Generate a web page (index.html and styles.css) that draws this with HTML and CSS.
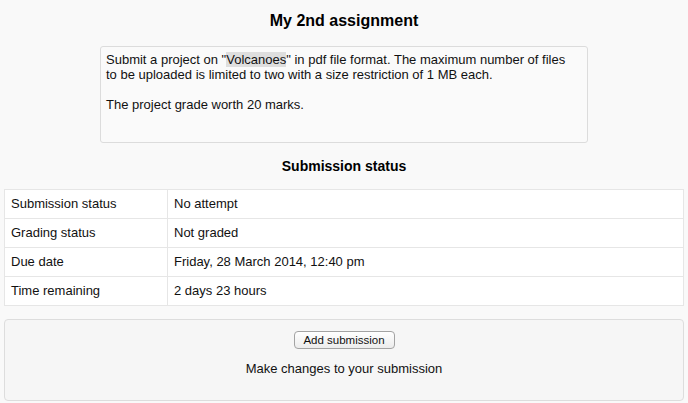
FILE: index.html
```html
<!DOCTYPE html>
<html lang="en">
<head>
<meta charset="utf-8">
<title>My 2nd assignment</title>
<link rel="stylesheet" href="styles.css">
</head>
<body>
<div class="page">
  <h2 class="title">My 2nd assignment</h2>
  <div class="intro">
    <p>Submit a project on "<span class="hl">Volcanoes</span>" in pdf file format. The maximum number of files to be uploaded is limited to two with a size restriction of 1 MB each.</p>
    <p>The project grade worth 20 marks.</p>
  </div>
  <h3 class="subtitle">Submission status</h3>
  <table class="status">
    <tr><td class="label">Submission status</td><td>No attempt</td></tr>
    <tr><td class="label">Grading status</td><td>Not graded</td></tr>
    <tr><td class="label">Due date</td><td>Friday, 28 March 2014, 12:40 pm</td></tr>
    <tr><td class="label">Time remaining</td><td>2 days 23 hours</td></tr>
  </table>
  <div class="actions">
    <button class="btn" type="button">Add submission</button>
    <p class="hint">Make changes to your submission</p>
  </div>
</div>
</body>
</html>
```
FILE: styles.css
```css
html, body {
  margin: 0;
  padding: 0;
  background: #f9f9f9;
}
body {
  font-family: "Liberation Sans", Arial, Helvetica, sans-serif;
  font-size: 13px;
  line-height: 15px;
  color: #111;
}
.page {
  padding: 0 4px;
}
.title {
  margin: 0;
  padding-top: 11px;
  font-size: 16px;
  line-height: 20px;
  font-weight: bold;
  text-align: center;
  color: #000;
}
.intro {
  width: 466px;
  margin: 15px auto 0;
  padding: 5px 15px 15px 5px;
  border: 1px solid #dcdcdc;
  border-radius: 3px;
  background: #fafafa;
}
.intro p {
  margin: 0 0 15px;
}
.hl {
  background: #dedede;
}
.subtitle {
  margin: 15px 0 14px;
  font-size: 14px;
  line-height: 17px;
  font-weight: bold;
  text-align: center;
  color: #000;
}
.status {
  width: 100%;
  border-collapse: collapse;
  background: #fff;
}
.status td {
  border: 1px solid #e6e6e6;
  padding: 6px 6px 7px;
  vertical-align: top;
}
.status td.label {
  width: 150px;
}
.actions {
  margin-top: 13px;
  padding: 11px 0 24px;
  border: 1px solid #dddddd;
  border-radius: 4px;
  background: #f6f6f6;
  text-align: center;
}
.btn {
  display: inline-block;
  height: 18px;
  width: 101px;
  padding: 0;
  font-family: "Liberation Sans", Arial, sans-serif;
  font-size: 11.5px;
  line-height: 16px;
  color: #111;
  background: linear-gradient(#ffffff, #ececec);
  border: 1px solid #a3a3a3;
  border-radius: 4px;
  vertical-align: top;
}
.hint {
  margin: 12px 0 0;
}
```
